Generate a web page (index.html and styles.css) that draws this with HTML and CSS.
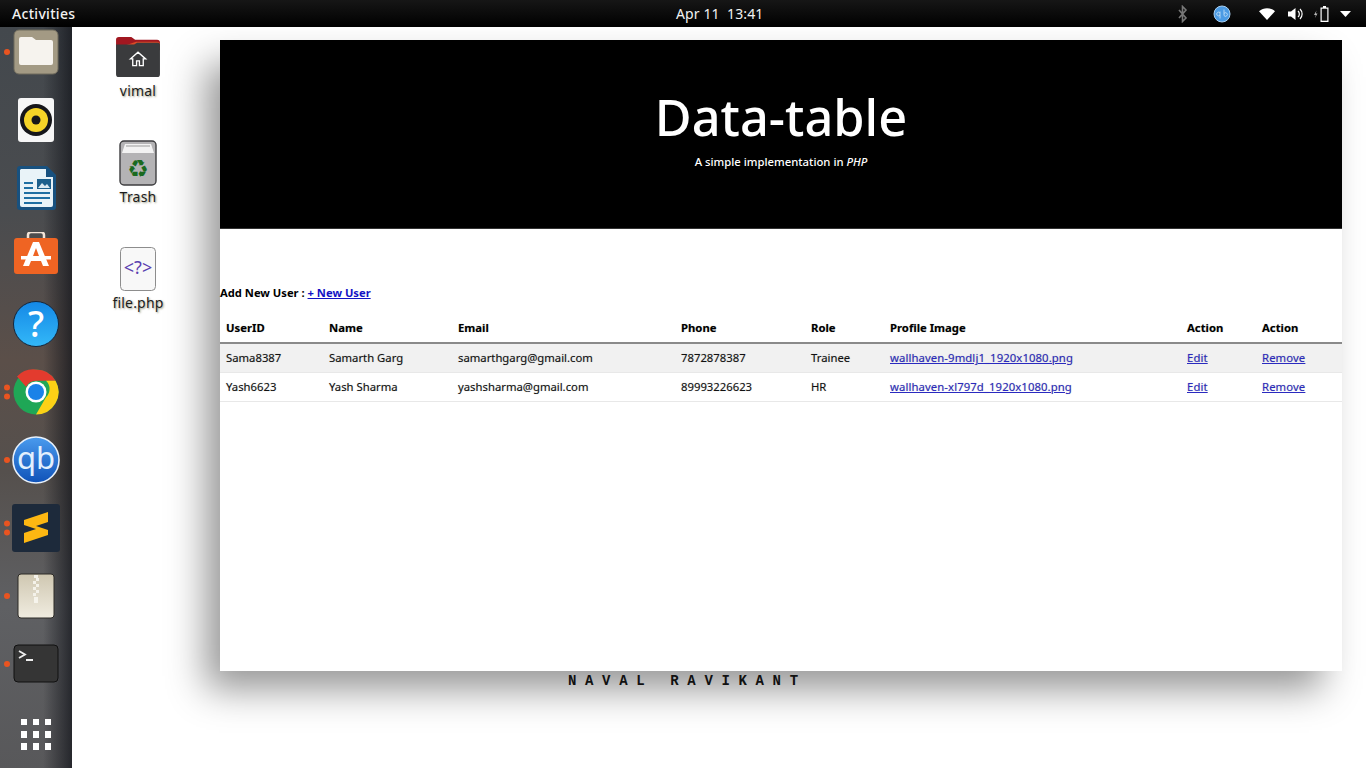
FILE: index.html
```html
<!DOCTYPE html>
<html lang="en">
<head>
<meta charset="utf-8">
<title>Data-table</title>
<link rel="stylesheet" href="styles.css">
</head>
<body>
<header class="topbar">
  <div class="activities">Activities</div>
  <div class="clock">Apr 11&nbsp; 13:41</div>
  <div class="tray">
    <svg class="tray-bt" width="12" height="18" viewBox="0 0 12 18"><path d="M2 5l7 8-3.500 3.500v-15L9 5l-7 8" fill="none" stroke="#777" stroke-width="1.600"/></svg>
    <svg class="tray-qb" width="18" height="18" viewBox="0 0 18 18"><circle cx="9" cy="9" r="8" fill="#4c9be4"/><circle cx="9" cy="9" r="8" fill="none" stroke="#a9cff0" stroke-width="1"/><path d="M7 6.500v7M7 8a1.800 1.800 0 1 0 0 2M11 4.500v6a1.800 1.800 0 1 0 0-2" fill="none" stroke="#bcdcf6" stroke-width=".9"/></svg>
    <svg class="tray-wifi" width="16" height="12" viewBox="0 0 16 12"><path d="M0 3.200C4.500-.9 11.500-.9 16 3.200L8 12z" fill="#fff"/></svg>
    <svg class="tray-vol" width="16" height="14" viewBox="0 0 16 14"><path d="M0 4.500h3L7.500 1v12L3 9.500H0z" fill="#fff"/><path d="M10 4a4 4 0 0 1 0 6M12 2a7 7 0 0 1 0 10" fill="none" stroke="#fff" stroke-width="1.200"/></svg>
    <svg class="tray-bat" width="16" height="16" viewBox="0 0 16 16"><path d="M2.500 4.500L0 9h1.800L1 12l2.500-4.500H1.800z" fill="#bbb"/><path d="M9 0h3v1.500h2.500V16h-8V1.500H9z" fill="#fff"/><path d="M7.700 2.700h5.600v12H7.700z" fill="#111"/></svg>
    <svg class="tray-arrow" width="11" height="6" viewBox="0 0 11 6"><path d="M0 0h11L5.500 6z" fill="#fff"/></svg>
  </div>
</header>

<div class="workspace">
  <nav class="dock">
    <div class="dock-item">
      <span class="dots"><i></i></span>
      <svg width="48" height="48" viewBox="0 0 48 48"><rect x="2" y="2" width="44" height="44" rx="5" fill="#a39a84"/><rect x="2" y="2" width="44" height="44" rx="5" fill="none" stroke="#6f6a5c"/><path d="M7 11a2 2 0 0 1 2-2h11l4 3h15a2 2 0 0 1 2 2v21a2 2 0 0 1-2 2H9a2 2 0 0 1-2-2z" fill="#f6f3ee"/></svg>
    </div>
    <div class="dock-item">
      <svg width="48" height="48" viewBox="0 0 48 48"><rect x="6" y="2" width="36" height="44" rx="3" fill="#f6f6f6"/><circle cx="24" cy="24" r="16" fill="#16161a"/><circle cx="24" cy="24" r="12" fill="#f5d327"/><circle cx="24" cy="24" r="4.500" fill="#16161a"/></svg>
    </div>
    <div class="dock-item">
      <svg width="48" height="48" viewBox="0 0 48 48"><path d="M8 2h27l9 9v32a3 3 0 0 1-3 3H8a3 3 0 0 1-3-3V5a3 3 0 0 1 3-3z" fill="#18517f"/><path d="M9 5h25v8h7v28a2 2 0 0 1-2 2H10a2 2 0 0 1-2-2V6z" fill="#e9f3f8"/><path d="M12 18h9v2h-9zM12 23h9v2h-9zM12 28h26v2H12zM12 33h26v2H12zM12 38h18v2H12z" fill="#1f6fa3"/><rect x="25" y="15" width="14" height="10" fill="#1c5f8c"/><path d="M26 24l4-5 3 3 2-2 3 4z" fill="#dbe9f1"/></svg>
    </div>
    <div class="dock-item">
      <svg width="48" height="48" viewBox="0 3 48 48"><path d="M16 10V6a3 3 0 0 1 3-3h10a3 3 0 0 1 3 3v4" fill="none" stroke="#f3e4d8" stroke-width="2.500"/><rect x="2" y="9" width="44" height="36" rx="3" fill="#ef6423"/><path fill-rule="evenodd" d="M21 13h6l10 24h-6l-2-5H19l-2 5h-6zM24 19l-3 8h6z" fill="#fff"/><path d="M9 27h30v3.500H9z" fill="#fff"/></svg>
    </div>
    <div class="dock-item">
      <svg width="48" height="48" viewBox="0 0 48 48"><defs><linearGradient id="hg" x1="0" y1="0" x2="0" y2="1"><stop offset="0" stop-color="#1488e6"/><stop offset="1" stop-color="#33b8f8"/></linearGradient></defs><circle cx="24" cy="24" r="22.500" fill="url(#hg)" stroke="#14253a"/><text x="24" y="37" class="help-mark">?</text></svg>
    </div>
    <div class="dock-item">
      <span class="dots"><i></i><i></i></span>
      <svg width="48" height="48" viewBox="0 0 48 48"><circle cx="24" cy="24" r="22.500" fill="#1fa756"/><path d="M24 1.500a22.500 22.500 0 0 1 19.500 11.250H24a11.300 11.300 0 0 0-10 6L5 8.500A22.500 22.500 0 0 1 24 1.500z" fill="#e33b2e"/><path d="M43.500 12.750A22.500 22.500 0 0 1 24 46.500l10-17.300a11.300 11.300 0 0 0 0-16.450z" fill="#fcd116"/><circle cx="24" cy="24" r="10.500" fill="#fff"/><circle cx="24" cy="24" r="8" fill="#1a82e8"/></svg>
    </div>
    <div class="dock-item">
      <span class="dots"><i></i></span>
      <svg width="48" height="48" viewBox="0 0 48 48"><defs><linearGradient id="qg" x1="0" y1="0" x2="0" y2="1"><stop offset="0" stop-color="#4a9bee"/><stop offset="1" stop-color="#0f52b8"/></linearGradient></defs><circle cx="24" cy="24" r="23" fill="url(#qg)" stroke="#e8f1fb" stroke-width="1.600"/><text x="24" y="33" class="qb-mark">qb</text></svg>
    </div>
    <div class="dock-item">
      <span class="dots"><i></i><i></i></span>
      <svg width="48" height="48" viewBox="0 0 48 48"><rect width="48" height="48" rx="3" fill="#1d2a3b"/><path d="M12 16L36 8V18L24 22 36 26V31L12 39V29L24 25 12 21Z" fill="#fdb712"/></svg>
    </div>
    <div class="dock-item">
      <span class="dots"><i></i></span>
      <svg width="48" height="48" viewBox="0 0 48 48"><defs><linearGradient id="zg" x1="0" y1="0" x2="0" y2="1"><stop offset="0" stop-color="#cfc7b1"/><stop offset="1" stop-color="#f0ece0"/></linearGradient></defs><rect x="6" y="2" width="36" height="44" rx="3" fill="url(#zg)" stroke="#2d2b27"/><path d="M22 3h4v3h-4zM24 6h3v3h-3zM21 9h3v3h-3zM24 12h3v3h-3zM21 15h3v3h-3zM24 18h3v3h-3zM21 21h3v3h-3z" fill="#f4f2ea"/><rect x="22" y="25" width="4" height="6" fill="#f6f4ec"/></svg>
    </div>
    <div class="dock-item">
      <span class="dots"><i></i></span>
      <svg width="48" height="48" viewBox="0 0 48 48"><rect x="2" y="5" width="44" height="37" rx="4" fill="#353535" stroke="#111"/><path d="M7 11l6 3.500-6 3.500" fill="none" stroke="#eee" stroke-width="1.800"/><path d="M14 19h7v2h-7z" fill="#eee"/></svg>
    </div>
    <div class="dock-item">
      <svg class="apps-grid" width="30" height="31" viewBox="0 0 30 31"><path d="M0 0h6v6H0zM12 0h6v6h-6zM24 0h6v6h-6zM0 12h6v7H0zM12 12h6v7h-6zM24 12h6v7h-6zM0 24h6v7H0zM12 24h6v7h-6zM24 24h6v7h-6z" fill="#fff"/></svg>
    </div>
  </nav>

  <section class="desktop">
    <div class="desktop-icon">
      <div class="icon-box">
        <svg width="46" height="42" viewBox="0 0 48 44"><path d="M1 4a3 3 0 0 1 3-3h13l4 3h23a3 3 0 0 1 3 3v8H1z" fill="#a11720"/><path d="M22 6h22a3 3 0 0 1 3 2v5H1z" fill="#d94a26"/><path d="M1 9h19l3-2h22a2 2 0 0 1 2 2v31a3 3 0 0 1-3 3H4a3 3 0 0 1-3-3z" fill="#3a3b3d"/><path d="M16 24l8-7 8 7h-2.500v7h-4v-5h-3v5h-4v-7z" fill="none" stroke="#fff" stroke-width="1.400"/></svg>
      </div>
      <span class="desktop-label">vimal</span>
    </div>
    <div class="desktop-icon">
      <div class="icon-box">
        <svg width="38" height="46" viewBox="0 0 38 46"><rect x="1" y="1" width="36" height="44" rx="4" fill="#b4b3b5" stroke="#3e3e40" stroke-width="1.400"/><path d="M6 4h26l3 9H3z" fill="#f2f2f2"/><path d="M7 6h24" stroke="#9a9a9a"/><text x="19" y="37" class="recycle-mark">♻</text></svg>
      </div>
      <span class="desktop-label">Trash</span>
    </div>
    <div class="desktop-icon">
      <div class="icon-box">
        <svg width="38" height="46" viewBox="0 0 38 46"><rect x="1.500" y="1.500" width="35" height="43" rx="4" fill="#f8f8f8" stroke="#8d8d8d"/><text x="19" y="28" class="php-mark">&lt;?&gt;</text></svg>
      </div>
      <span class="desktop-label">file.php</span>
    </div>
  </section>

  <main class="window">
    <div class="hero">
      <h1 class="hero-title">Data-table</h1>
      <p class="hero-sub">A simple implementation in <em>PHP</em></p>
    </div>
    <p class="add-line">Add New User : <a href="#">+ New User</a></p>
    <table class="users">
      <thead>
        <tr><th>UserID</th><th>Name</th><th>Email</th><th>Phone</th><th>Role</th><th>Profile Image</th><th>Action</th><th>Action</th></tr>
      </thead>
      <tbody>
        <tr><td>Sama8387</td><td>Samarth Garg</td><td>samarthgarg@gmail.com</td><td>7872878387</td><td>Trainee</td><td><a href="#">wallhaven-9mdlj1_1920x1080.png</a></td><td><a href="#">Edit</a></td><td><a href="#">Remove</a></td></tr>
        <tr><td>Yash6623</td><td>Yash Sharma</td><td>yashsharma@gmail.com</td><td>89993226623</td><td>HR</td><td><a href="#">wallhaven-xl797d_1920x1080.png</a></td><td><a href="#">Edit</a></td><td><a href="#">Remove</a></td></tr>
      </tbody>
    </table>
  </main>
  <div class="quote">NAVAL RAVIKANT</div>
</div>
</body>
</html>
```

FILE: styles.css
```css
* { box-sizing: border-box; }
html, body { margin: 0; height: 100%; }
body {
  width: 1366px;
  height: 768px;
  overflow: hidden;
  background: #fff;
  font-family: "Noto Sans", "Open Sans", sans-serif;
  display: flex;
  flex-direction: column;
}
svg { display: block; }

.topbar {
  height: 27px;
  flex: none;
  background: linear-gradient(#161616, #000);
  color: #f2f2f2;
  font-size: 14px;
  position: relative;
  display: flex;
  align-items: center;
  justify-content: space-between;
}
.activities { padding-left: 12px; font-weight: 500; letter-spacing: 0.3px; }
.clock {
  position: absolute;
  left: 676px;
  top: 4px;
  letter-spacing: 0.1px;
}
.tray { display: flex; align-items: center; padding-right: 15px; }
.tray-bt { margin-right: 24px; }
.tray-qb { margin-right: 28px; }
.tray-wifi { margin-right: 13px; }
.tray-vol { margin-right: 10px; }
.tray-bat { margin-right: 10px; }

.workspace { flex: 1; display: flex; position: relative; }

.dock {
  width: 72px;
  flex: none;
  padding-top: 1px;
  display: flex;
  flex-direction: column;
  gap: 20px;
  background:
    linear-gradient(90deg, rgba(70,72,76,.0) 0, rgba(70,72,76,0) 60%, rgba(20,22,28,.75) 100%),
    linear-gradient(#43484d 0, #4a4c4f 25%, #5b4f49 45%, #55504d 60%, #5f6063 78%, #58585a 100%);
}
.dock-item {
  height: 48px;
  position: relative;
  display: flex;
  align-items: center;
  justify-content: center;
}
.apps-grid { margin-top: 5px; }
.dots {
  position: absolute;
  left: 4px;
  top: 50%;
  transform: translateY(-50%);
  display: flex;
  flex-direction: column;
  gap: 3px;
}
.dots i {
  display: block;
  width: 6px;
  height: 6px;
  border-radius: 50%;
  background: #e95420;
}
.help-mark {
  font: 500 36px "Noto Sans", sans-serif;
  fill: #fff;
  text-anchor: middle;
}
.qb-mark {
  font: 400 31px "Noto Sans", sans-serif;
  fill: #e3f0fd;
  text-anchor: middle;
}

.desktop {
  width: 132px;
  flex: none;
  padding-top: 7px;
  display: flex;
  flex-direction: column;
}
.desktop-icon {
  height: 106px;
  flex: none;
  display: flex;
  flex-direction: column;
  align-items: center;
}
.icon-box {
  height: 46px;
  display: flex;
  align-items: center;
}
.desktop-label {
  margin-top: 2px;
  font-size: 14px;
  line-height: 18px;
  letter-spacing: 0.2px;
  color: #1c1c1c;
  text-shadow: 1px 1px 2px rgba(90,90,50,.6);
}
.php-mark {
  font: 400 18px "Noto Sans", sans-serif;
  fill: #5b3fb0;
  text-anchor: middle;
}
.recycle-mark {
  font: 400 24px "DejaVu Sans", sans-serif;
  fill: #1a6a1f;
  text-anchor: middle;
}

.window {
  position: absolute;
  left: 220px;
  top: 13px;
  width: 1122px;
  height: 631px;
  background: #fff;
  box-shadow: -17px 21px 36px -3px rgba(0,0,0,.42);
  z-index: 1;
  color: #000;
}
.hero {
  height: 189px;
  background: #000;
  color: #fff;
  display: flex;
  flex-direction: column;
  align-items: center;
  padding-top: 44px;
  border-bottom: 1px solid #333;
}
.hero-title {
  margin: 0;
  font-size: 50.500px;
  line-height: 66px;
  font-weight: 500;
}
.hero-sub {
  margin: 4px 0 0;
  font-size: 11.300px;
  line-height: 16px;
  font-weight: 500;
}
.add-line {
  margin: 56px 0 0;
  font-size: 11.200px;
  line-height: 16px;
  font-weight: 700;
}
.add-line a { color: #1212c4; }

.users {
  width: 1122px;
  margin-top: 12px;
  border-collapse: collapse;
  table-layout: fixed;
  font-size: 11.300px;
  text-shadow: 0 0 1px rgba(0,0,0,.3);
}
.users th, .users td {
  padding: 0 6px;
  text-align: left;
  white-space: nowrap;
}
.users th {
  height: 30px;
  font-weight: 700;
  border-bottom: 2px solid #8a8a8a;
}
.users td {
  height: 29px;
  border-bottom: 1px solid #e8e8e8;
  color: #111;
}
.users a { color: #2a2ac0; letter-spacing: 0.1px; }
.users tbody tr:first-child td {
  background: #f1f1f1;
}
.users th:nth-child(1) { width: 103px; }
.users th:nth-child(2) { width: 129px; }
.users th:nth-child(3) { width: 223px; }
.users th:nth-child(4) { width: 130px; }
.users th:nth-child(5) { width: 79px; }
.users th:nth-child(6) { width: 297px; }
.users th:nth-child(7) { width: 75px; }
.users th:nth-child(8) { width: 86px; }

.quote {
  position: absolute;
  left: 568px;
  top: 646px;
  z-index: 2;
  font: 700 14px/16px "Liberation Mono", monospace;
  letter-spacing: 8.650px;
  white-space: pre;
  color: #111;
}
```
